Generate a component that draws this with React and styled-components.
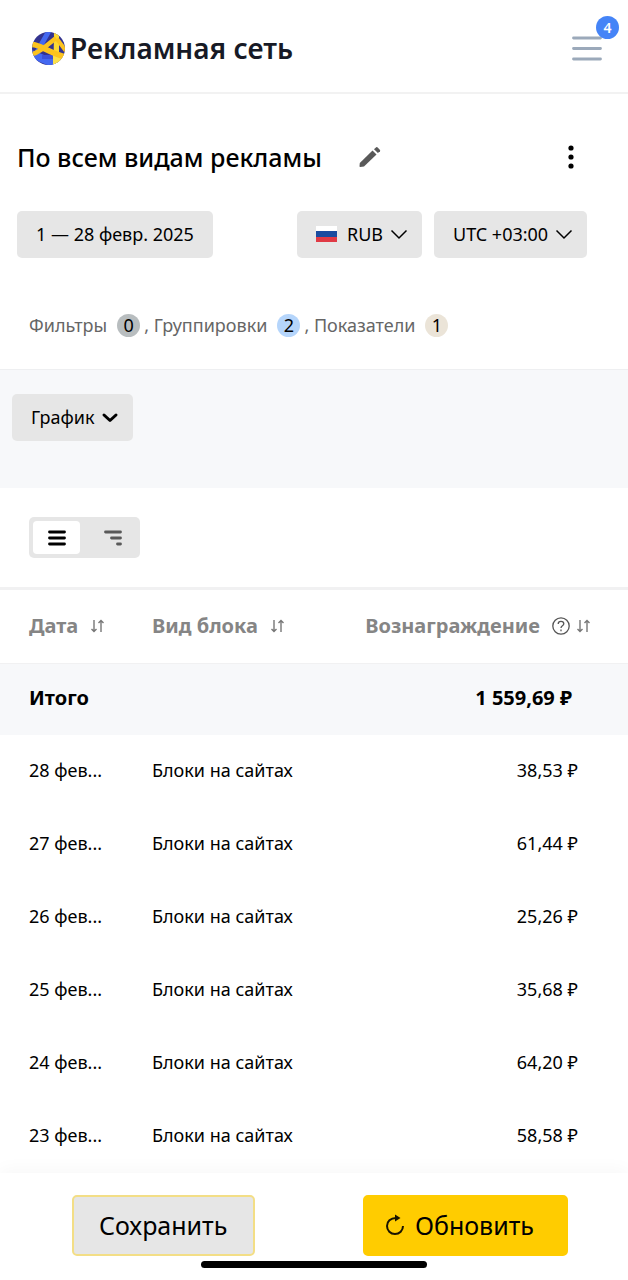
import { useState } from "react";
import styled, { createGlobalStyle, css } from "styled-components";

const GlobalStyle = createGlobalStyle`
  * {
    box-sizing: border-box;
  }

  body {
    margin: 0;
    background: #fff;
    color: #000;
    font-family: "Noto Sans", "Open Sans", sans-serif;
    font-size: 18px;
    line-height: 24px;
  }

  button, select {
    font: inherit;
    color: inherit;
    cursor: pointer;
  }

  svg {
    display: block;
    flex: none;
  }
`;

const Page = styled.div`
  min-height: 100vh;
  display: flex;
  flex-direction: column;
`;

const Header = styled.header`
  display: flex;
  align-items: center;
  justify-content: space-between;
  height: 94px;
  padding: 4px 26px 0 32px;
  border-bottom: 2px solid #f2f2f2;
`;

const Brand = styled.a`
  display: flex;
  align-items: center;
  gap: 5px;
  color: #171a26;
  font-size: 28px;
  font-weight: 600;
  line-height: 40px;
  text-decoration: none;
`;

const MenuButton = styled.button`
  position: relative;
  padding: 0;
  border: 0;
  background: transparent;
`;

const Counter = styled.span`
  position: absolute;
  top: -20px;
  right: -17px;
  width: 23px;
  height: 23px;
  border-radius: 50%;
  background: #4584f7;
  color: #fff;
  font-size: 14px;
  font-weight: 600;
  line-height: 23px;
  text-align: center;
`;

const TitleRow = styled.div`
  display: flex;
  align-items: center;
  padding: 44px 45px 0 17px;
`;

const Title = styled.h1`
  margin: 0;
  font-size: 25px;
  font-weight: 500;
  line-height: 38px;
`;

const IconButton = styled.button`
  display: flex;
  padding: 0;
  border: 0;
  background: transparent;
  margin-left: ${props => (props.$end ? "auto" : "36px")};
`;

const Controls = styled.div`
  display: flex;
  gap: 12px;
  padding: 35px 41px 0 17px;
`;

const pill = css`
  display: flex;
  align-items: center;
  height: 47px;
  border: 0;
  border-radius: 5px;
  background: #e6e6e6;
`;

const PillButton = styled.button`
  ${pill}
  gap: 6px;
  padding: 0 ${props => (props.$caret ? "14px" : "19px")} 2px 19px;
`;

const Dropdown = styled.label`
  ${pill}
  gap: 6px;
  padding: 0 14px 2px 19px;
  cursor: pointer;

  &:first-of-type {
    margin-left: auto;
  }
`;

const Select = styled.select`
  appearance: none;
  padding: 0;
  border: 0;
  background: transparent;
`;

const Flag = styled.svg`
  margin-right: 4px;
`;

const Summary = styled.div`
  display: flex;
  align-items: center;
  padding: 55px 29px 32px;
  color: #666;
`;

const Badge = styled.span`
  width: 23px;
  height: 23px;
  margin: 0 4px 0 10px;
  border-radius: 50%;
  background: ${props => props.$color};
  color: #000;
  line-height: 23px;
  text-align: center;
`;

const ChartPanel = styled.section`
  height: 119px;
  padding: 24px 12px;
  border-top: 1px solid #eeeff1;
  background: #f7f8fa;
`;

const ViewBar = styled.div`
  padding: 29px;
`;

const Switcher = styled.div`
  display: inline-flex;
  gap: 9px;
  vertical-align: top;
  padding: 4px;
  border-radius: 5px;
  background: #e6e6e6;
`;

const ViewButton = styled.button`
  display: flex;
  align-items: center;
  justify-content: center;
  width: 47px;
  height: 33px;
  padding: 0;
  border: 0;
  border-radius: 4px;
  background: ${props => (props.$active ? "#fff" : "transparent")};
  color: ${props => (props.$active ? "#000" : "#595959")};
`;

const Table = styled.table`
  width: 100%;
  border-top: 3px solid #f1f1f2;
  border-collapse: separate;
  border-spacing: 0;
  table-layout: fixed;
`;

const HeadCell = styled.th`
  width: ${props => props.$width || "auto"};
  height: 73px;
  padding: 0 ${props => (props.$right ? "37px" : "0")} 2px 29px;
  color: #858585;
  font-size: 20px;
  font-weight: 700;
`;

const SortButton = styled.button`
  display: flex;
  align-items: center;
  gap: ${props => (props.$right ? "6px" : "12px")};
  margin-left: ${props => (props.$right ? "auto" : "0")};
  padding: 0;
  border: 0;
  background: transparent;
  white-space: nowrap;
`;

const HelpIcon = styled.svg`
  margin-left: 6px;
`;

const Cell = styled.td`
  height: 73px;
  padding: 0 0 4px 29px;
  overflow: hidden;
  white-space: nowrap;

  &:last-child {
    padding-right: 50px;
    text-align: right;
  }
`;

const TotalCell = styled(Cell)`
  height: 72px;
  border-top: 1px solid #f1f1f2;
  background: #f7f8fa;
  font-size: 20px;
  font-weight: 700;

  &:last-child {
    padding-right: 56px;
  }
`;

const Footer = styled.footer`
  position: sticky;
  bottom: 0;
  margin-top: auto;
  padding: 22px 60px 12px 72px;
  background: #fff;
  box-shadow: 0 -4px 16px rgba(0, 0, 0, 0.03);
`;

const Actions = styled.div`
  display: flex;
  justify-content: space-between;
`;

const ActionButton = styled.button`
  display: flex;
  align-items: center;
  gap: 10px;
  height: 61px;
  padding: 0 ${props => (props.$primary ? "32px 2px 20px" : "26px 2px 25px")};
  border: 2px solid ${props => (props.$primary ? "#ffcc00" : "#f3de86")};
  border-radius: 5px;
  background: ${props => (props.$primary ? "#ffcc00" : "#e6e6e6")};
  font-size: 25px;
`;

const HomeIndicator = styled.div`
  width: 36vw;
  height: 7px;
  margin: 5px auto 0;
  border-radius: 4px;
  background: #000;
`;

// centers the indicator on the window, not on the padded buttons row
const IndicatorRow = styled.div`
  margin: 0 -60px 0 -72px;
`;

const rows = [
  { date: "28 фев...", block: "Блоки на сайтах", sum: "38,53 ₽" },
  { date: "27 фев...", block: "Блоки на сайтах", sum: "61,44 ₽" },
  { date: "26 фев...", block: "Блоки на сайтах", sum: "25,26 ₽" },
  { date: "25 фев...", block: "Блоки на сайтах", sum: "35,68 ₽" },
  { date: "24 фев...", block: "Блоки на сайтах", sum: "64,20 ₽" },
  { date: "23 фев...", block: "Блоки на сайтах", sum: "58,58 ₽" },
];

function Logo() {
  return (
    <svg width="33" height="33" viewBox="0 0 33 33" aria-hidden="true">
      <clipPath id="logo-circle">
        <circle cx="16.5" cy="16.5" r="16.5" />
      </clipPath>
      <g clipPath="url(#logo-circle)">
        <rect width="33" height="33" fill="#33338f" />
        <path d="M18 -3 L4 22" stroke="#4468f0" strokeWidth="5" />
        <path d="M-1 22 L26 33" stroke="#4468f0" strokeWidth="8" />
        <path d="M10 25 L22 25" stroke="#3a50d8" strokeWidth="4" />
        <path d="M22 -1 H27 L27 34 H21.5 Z" fill="#fcd934" />
        <path d="M21 21 L34 23 L30 34 H21 Z" fill="#fbe04a" />
        <path d="M-1 22.5 C6 21 13 15 24 6" stroke="#fcc31e" strokeWidth="4.5" fill="none" />
        <path d="M-1 12.5 C8 12 14 20 34 25" stroke="#fcc31e" strokeWidth="5.5" fill="none" />
        <path d="M25 7 L34 19" stroke="#fcc31e" strokeWidth="4" />
      </g>
    </svg>
  );
}

function Chevron({ bold }) {
  return (
    <svg width="18" height="12" viewBox="0 0 18 12" fill="none" stroke="#000" aria-hidden="true">
      {bold
        ? <path d="M3 4 L9 9.5 L15 4" strokeWidth="3" strokeLinecap="round" strokeLinejoin="round" />
        : <path d="M1.5 2.5 L9 10 L16.5 2.5" strokeWidth="1.5" />}
    </svg>
  );
}

function SortArrows() {
  return (
    <svg width="15" height="14" viewBox="0 0 15 14" fill="none" stroke="#777" strokeWidth="1.4" aria-hidden="true">
      <path d="M4 1 V12.5 M1.5 10 L4 12.5 L6.5 10" />
      <path d="M11 13 V1.5 M8.5 4 L11 1.5 L13.5 4" />
    </svg>
  );
}

function App() {
  const [view, setView] = useState("list");

  return (
    <Page>
      <GlobalStyle />
      <Header>
        <Brand href="#"><Logo />Рекламная сеть</Brand>
        <MenuButton aria-label="Меню">
          <svg width="30" height="25" viewBox="0 0 30 25" stroke="#9ba9ba" strokeWidth="2.8" strokeLinecap="round">
            <path d="M1.5 2 H28.5 M1.5 12.5 H28.5 M1.5 23 H28.5" />
          </svg>
          <Counter>4</Counter>
        </MenuButton>
      </Header>

      <TitleRow>
        <Title>По всем видам рекламы</Title>
        <IconButton aria-label="Редактировать">
          <svg width="24" height="22" viewBox="0 0 24 22" fill="#595959">
            <path d="M2.2 21 Q1.5 21 1.5 20.3 L1.8 17 L14.5 4.5 L18.5 8.5 L6 20.6 Z" />
            <path d="M16 3.2 L18.2 1.2 Q18.8 0.8 19.4 1.3 L22 4 Q22.4 4.6 22 5.2 L19.9 7.1 Z" />
          </svg>
        </IconButton>
        <IconButton $end aria-label="Ещё">
          <svg width="24" height="24" viewBox="0 0 24 24">
            <circle cx="12" cy="3" r="2.6" />
            <circle cx="12" cy="12" r="2.6" />
            <circle cx="12" cy="21" r="2.6" />
          </svg>
        </IconButton>
      </TitleRow>

      <Controls>
        <PillButton>1 — 28 февр. 2025</PillButton>
        <Dropdown>
          <Flag width="21" height="16" viewBox="0 0 21 16" aria-hidden="true">
            <rect width="21" height="16" fill="#fff" />
            <rect y="5" width="21" height="6" fill="#1a4ca0" />
            <rect y="11" width="21" height="5" fill="#e03a45" />
          </Flag>
          <Select aria-label="Валюта"><option>RUB</option></Select>
          <Chevron />
        </Dropdown>
        <Dropdown>
          <Select aria-label="Часовой пояс"><option>UTC +03:00</option></Select>
          <Chevron />
        </Dropdown>
      </Controls>

      <Summary>
        Фильтры<Badge $color="#b8bdbf">0</Badge>, Группировки<Badge $color="#b5d5fb">2</Badge>, Показатели<Badge $color="#ebe4d8">1</Badge>
      </Summary>

      <ChartPanel>
        <PillButton $caret>График<Chevron bold /></PillButton>
      </ChartPanel>

      <ViewBar>
        <Switcher>
          <ViewButton $active={view === "list"} aria-pressed={view === "list"} aria-label="Список" onClick={() => setView("list")}>
            <svg width="18" height="16" viewBox="0 0 18 16" stroke="currentColor" strokeWidth="2.8" strokeLinecap="round">
              <path d="M1.5 2 H16.5 M1.5 8 H16.5 M1.5 14 H16.5" />
            </svg>
          </ViewButton>
          <ViewButton $active={view === "tree"} aria-pressed={view === "tree"} aria-label="Дерево" onClick={() => setView("tree")}>
            <svg width="18" height="16" viewBox="0 0 18 16" stroke="currentColor" strokeWidth="2.8" strokeLinecap="round">
              <path d="M1.5 2 H16.5 M7.5 8 H16.5 M13.5 14 H16.5" />
            </svg>
          </ViewButton>
        </Switcher>
      </ViewBar>

      <Table>
        <thead>
          <tr>
            <HeadCell $width="123px"><SortButton>Дата<SortArrows /></SortButton></HeadCell>
            <HeadCell $width="170px"><SortButton>Вид блока<SortArrows /></SortButton></HeadCell>
            <HeadCell $right>
              <SortButton $right>
                Вознаграждение
                <HelpIcon width="18" height="18" viewBox="0 0 18 18" fill="none" stroke="#555" strokeWidth="1.3" aria-hidden="true">
                  <circle cx="9" cy="9" r="8.2" />
                  <path d="M6.2 7 C6.2 3.4 11.8 3.6 11.8 6.8 C11.8 8.8 9 8.8 9 11" />
                  <path d="M9 12.6 V14.2" />
                </HelpIcon>
                <SortArrows />
              </SortButton>
            </HeadCell>
          </tr>
        </thead>
        <tbody>
          <tr>
            <TotalCell>Итого</TotalCell>
            <TotalCell />
            <TotalCell>1 559,69 ₽</TotalCell>
          </tr>
          {rows.map(row => (
            <tr key={row.date}>
              <Cell>{row.date}</Cell>
              <Cell>{row.block}</Cell>
              <Cell>{row.sum}</Cell>
            </tr>
          ))}
        </tbody>
      </Table>

      <Footer>
        <Actions>
          <ActionButton>Сохранить</ActionButton>
          <ActionButton $primary>
            <svg width="20" height="22" viewBox="0 0 20 22" fill="none" stroke="#1a1400" strokeWidth="2" aria-hidden="true">
              <path d="M11 4 C5.5 4 2 7.5 2 12 S5.5 20 10 20 S18 16.5 18 12" />
              <path d="M10 0.5 L15.5 4 L10 7.5 Z" fill="#1a1400" stroke="none" />
            </svg>
            Обновить
          </ActionButton>
        </Actions>
        <IndicatorRow><HomeIndicator /></IndicatorRow>
      </Footer>
    </Page>
  );
}

export default App;
